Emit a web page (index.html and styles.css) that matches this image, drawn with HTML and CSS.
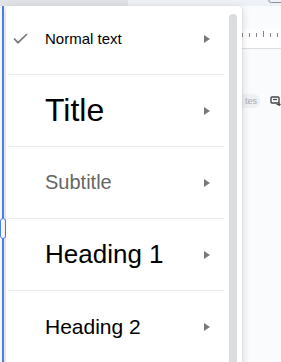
FILE: index.html
```html
<!DOCTYPE html>
<html>
	<head>
		<title>Paragraph styles</title>
		<meta charset="utf-8" />
		<link rel="stylesheet" href="styles.css">
	</head>
	<body>
		<div class="topbar">
			<div class="tab-dark"></div>
			<div class="tab-light"><div class="box-corner"></div></div>
		</div>

		<div class="workspace">
			<div class="rail">
				<div class="rail-line"></div>
				<!-- Drag handle -->
				<div class="handle"></div>
			</div>

			<div class="doc">
				<div class="ruler">
					<span class="tick"></span>
					<span class="tick"></span>
					<span class="tick"></span>
					<span class="tick tick-tall"></span>
					<span class="tick"></span>
					<span class="tick"></span>
				</div>
				<div class="chip-row">
					<span class="chip">tes</span>
					<svg class="chip-icon" width="11" height="10" viewBox="0 0 11 10">
						<rect x="1" y="1" width="8" height="6" rx="1" fill="none" stroke="#444746" stroke-width="1.4"/>
						<path d="M3 3.5h4" stroke="#444746" stroke-width="1.2"/>
						<path d="M6.5 8.5h3.5M8.6 7l1.5 1.5-1.5 1.5" fill="none" stroke="#444746" stroke-width="1.2"/>
					</svg>
				</div>
			</div>
		</div>

		<!-- Styles menu -->
		<div class="menu">
			<div class="menu-list">
				<div class="menu-item">
					<span class="check">
						<svg width="15" height="11" viewBox="0 0 15 11">
							<path d="M1 5.5l4 4.2L14 1" fill="none" stroke="#75787c" stroke-width="1.7"/>
						</svg>
					</span>
					<span class="item-text normal">Normal text</span>
					<span class="arrow"></span>
				</div>
				<div class="menu-item">
					<span class="check"></span>
					<span class="item-text title-style">Title</span>
					<span class="arrow"></span>
				</div>
				<div class="menu-item">
					<span class="check"></span>
					<span class="item-text subtitle">Subtitle</span>
					<span class="arrow"></span>
				</div>
				<div class="menu-item">
					<span class="check"></span>
					<span class="item-text heading-1">Heading 1</span>
					<span class="arrow"></span>
				</div>
				<div class="menu-item">
					<span class="check"></span>
					<span class="item-text heading-2">Heading 2</span>
					<span class="arrow"></span>
				</div>
			</div>
			<div class="scrollbar"></div>
		</div>
	</body>
</html>
```

FILE: styles.css
```css
* {
	padding: 0;
	margin: 0;
	box-sizing: border-box;
}

body {
	font-family: "Liberation Sans", Arial, sans-serif;
	background: #f9fbfd;
	width: 281px;
	height: 362px;
	overflow: hidden;
	position: relative;
}

.topbar {
	height: 6px;
	display: flex;
}

.tab-dark {
	width: 128px;
	background: #e1e3e6;
}

.tab-light {
	flex: 1;
	background: #eef1f5;
	position: relative;
}

.box-corner {
	position: absolute;
	left: 140px;
	top: -4px;
	width: 20px;
	height: 7px;
	border: 1px solid #8d9096;
	border-radius: 4px;
}

.workspace {
	display: flex;
	height: 356px;
}

.rail {
	width: 6px;
	position: relative;
}

.rail-line {
	margin-left: 2px;
	width: 2px;
	height: 100%;
	background: #4a80ef;
}

.handle {
	position: absolute;
	left: 0;
	top: 212px;
	width: 6px;
	height: 21px;
	background: #fff;
	border: 1.5px solid #4a80ef;
	border-radius: 3px;
}

.doc {
	flex: 1;
	padding-left: 236px;
	display: flex;
	flex-direction: column;
}

.ruler {
	margin-top: 23px;
	height: 20px;
	border-bottom: 1px solid #dadce0;
	display: flex;
	align-items: flex-start;
	gap: 6px;
	padding-left: 2px;
	background: #fff;
}

.tick {
	width: 1px;
	height: 4px;
	margin-top: 4px;
	background: #80868b;
}

.tick-tall {
	height: 6px;
	margin-top: 2px;
}

.chip-row {
	margin-top: 45px;
	display: flex;
	align-items: center;
	gap: 10px;
}

.chip {
	width: 20px;
	height: 14px;
	border-radius: 0 7px 7px 0;
	background: #eef0f3;
	color: #a8abb0;
	font-size: 9px;
	line-height: 14px;
	text-align: right;
	padding-right: 3px;
}

.chip-icon {
	display: block;
}

.menu {
	position: absolute;
	left: 6px;
	top: 6px;
	width: 236px;
	height: 370px;
	background: #fff;
	border-radius: 4px 4px 0 0;
	box-shadow: 0 2px 6px 2px rgba(60, 64, 67, 0.12),
		0 1px 2px rgba(60, 64, 67, 0.2);
	display: flex;
	overflow: hidden;
}

.menu-list {
	margin-top: -3px;
	margin-left: 2px;
	width: 216px;
}

.menu-item {
	height: 72px;
	border-bottom: 1px solid #e8eaed;
	display: flex;
	align-items: center;
	padding-right: 14px;
}

.check {
	width: 37px;
	padding-left: 5px;
	display: flex;
	align-items: center;
}

.item-text {
	flex: 1;
	color: #000;
	white-space: nowrap;
}

.normal {
	font-size: 15px;
}

.title-style {
	font-size: 32px;
}

.subtitle {
	font-size: 20px;
	color: #666;
}

.heading-1 {
	font-size: 26px;
}

.heading-2 {
	font-size: 21px;
}

.arrow {
	width: 0;
	height: 0;
	border-top: 4px solid transparent;
	border-bottom: 4px solid transparent;
	border-left: 6px solid #7a7a7a;
}

.scrollbar {
	margin-left: 5px;
	margin-top: 8px;
	width: 8px;
	height: 400px;
	background: #dadce0;
	border-radius: 4px;
}
```
